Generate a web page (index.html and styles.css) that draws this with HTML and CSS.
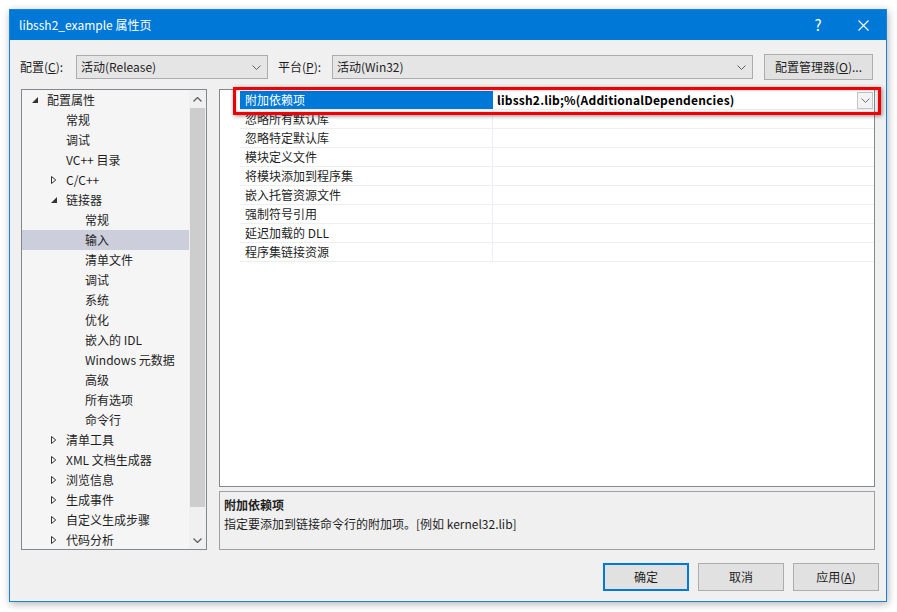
FILE: index.html
```html
<!DOCTYPE html>
<html>
  <head>
    <meta charset="UTF-8" />
    <title>libssh2_example 属性页</title>
    <link rel="stylesheet" href="styles.css">
  </head>
  <body>
    <div class="window">
      <div class="titlebar">
        <span class="title">libssh2_example 属性页</span>
        <span class="tb-help">?</span>
        <span class="tb-close">
          <svg width="11" height="11" viewBox="0 0 11 11"><path d="M0.5 0.5 L10.5 10.5 M10.5 0.5 L0.5 10.5" stroke="#fff" stroke-width="1.1" fill="none"/></svg>
        </span>
      </div>

      <div class="client">
        <div class="config-row">
          <span class="lbl lbl-config">配置(<u>C</u>):</span>
          <div class="combo combo-config">
            <span>活动(Release)</span>
            <svg class="chev" width="9" height="5" viewBox="0 0 9 5"><polyline points="0.5,0.5 4.5,4.5 8.5,0.5" fill="none" stroke="#606060"/></svg>
          </div>
          <span class="lbl lbl-platform">平台(<u>P</u>):</span>
          <div class="combo combo-platform">
            <span>活动(Win32)</span>
            <svg class="chev" width="9" height="5" viewBox="0 0 9 5"><polyline points="0.5,0.5 4.5,4.5 8.5,0.5" fill="none" stroke="#606060"/></svg>
          </div>
          <button class="btn btn-manager">配置管理器(<u>O</u>)...</button>
        </div>

        <div class="main">
          <div class="tree">
            <ul class="tree-list">
              <li class="node lvl0"><span class="exp"><svg width="6" height="6" viewBox="0 0 6 6"><polygon points="6,0 6,6 0,6" fill="#333"/></svg></span>配置属性</li>
              <li class="node lvl1"><span class="exp"></span>常规</li>
              <li class="node lvl1"><span class="exp"></span>调试</li>
              <li class="node lvl1"><span class="exp"></span>VC++ 目录</li>
              <li class="node lvl1"><span class="exp"><svg width="6" height="8" viewBox="0 0 6 8"><polygon points="0.5,0.5 4.8,4 0.5,7.5" fill="none" stroke="#333"/></svg></span>C/C++</li>
              <li class="node lvl1"><span class="exp"><svg width="6" height="6" viewBox="0 0 6 6"><polygon points="6,0 6,6 0,6" fill="#333"/></svg></span>链接器</li>
              <li class="node lvl2"><span class="exp"></span>常规</li>
              <li class="node lvl2 selected"><span class="exp"></span>输入</li>
              <li class="node lvl2"><span class="exp"></span>清单文件</li>
              <li class="node lvl2"><span class="exp"></span>调试</li>
              <li class="node lvl2"><span class="exp"></span>系统</li>
              <li class="node lvl2"><span class="exp"></span>优化</li>
              <li class="node lvl2"><span class="exp"></span>嵌入的 IDL</li>
              <li class="node lvl2"><span class="exp"></span>Windows 元数据</li>
              <li class="node lvl2"><span class="exp"></span>高级</li>
              <li class="node lvl2"><span class="exp"></span>所有选项</li>
              <li class="node lvl2"><span class="exp"></span>命令行</li>
              <li class="node lvl1"><span class="exp"><svg width="6" height="8" viewBox="0 0 6 8"><polygon points="0.5,0.5 4.8,4 0.5,7.5" fill="none" stroke="#333"/></svg></span>清单工具</li>
              <li class="node lvl1"><span class="exp"><svg width="6" height="8" viewBox="0 0 6 8"><polygon points="0.5,0.5 4.8,4 0.5,7.5" fill="none" stroke="#333"/></svg></span>XML 文档生成器</li>
              <li class="node lvl1"><span class="exp"><svg width="6" height="8" viewBox="0 0 6 8"><polygon points="0.5,0.5 4.8,4 0.5,7.5" fill="none" stroke="#333"/></svg></span>浏览信息</li>
              <li class="node lvl1"><span class="exp"><svg width="6" height="8" viewBox="0 0 6 8"><polygon points="0.5,0.5 4.8,4 0.5,7.5" fill="none" stroke="#333"/></svg></span>生成事件</li>
              <li class="node lvl1"><span class="exp"><svg width="6" height="8" viewBox="0 0 6 8"><polygon points="0.5,0.5 4.8,4 0.5,7.5" fill="none" stroke="#333"/></svg></span>自定义生成步骤</li>
              <li class="node lvl1"><span class="exp"><svg width="6" height="8" viewBox="0 0 6 8"><polygon points="0.5,0.5 4.8,4 0.5,7.5" fill="none" stroke="#333"/></svg></span>代码分析</li>
            </ul>
            <div class="vscroll">
              <div class="sarrow">
                <svg width="9" height="5" viewBox="0 0 9 5"><polyline points="0.5,4.5 4.5,0.5 8.5,4.5" fill="none" stroke="#606060" stroke-width="1.3"/></svg>
              </div>
              <div class="thumb"></div>
              <div class="sarrow">
                <svg width="9" height="5" viewBox="0 0 9 5"><polyline points="0.5,0.5 4.5,4.5 8.5,0.5" fill="none" stroke="#606060" stroke-width="1.3"/></svg>
              </div>
            </div>
          </div>

          <div class="right">
            <div class="grid">
              <div class="prow active">
                <div class="pname">附加依赖项</div>
                <div class="pval">
                  <span class="pval-text">libssh2.lib;%(AdditionalDependencies)</span>
                  <span class="dd">
                    <svg width="9" height="5" viewBox="0 0 9 5"><polyline points="0.5,0.5 4.5,4.5 8.5,0.5" fill="none" stroke="#707070"/></svg>
                  </span>
                </div>
              </div>
              <div class="prow"><div class="pname">忽略所有默认库</div><div class="pval"></div></div>
              <div class="prow"><div class="pname">忽略特定默认库</div><div class="pval"></div></div>
              <div class="prow"><div class="pname">模块定义文件</div><div class="pval"></div></div>
              <div class="prow"><div class="pname">将模块添加到程序集</div><div class="pval"></div></div>
              <div class="prow"><div class="pname">嵌入托管资源文件</div><div class="pval"></div></div>
              <div class="prow"><div class="pname">强制符号引用</div><div class="pval"></div></div>
              <div class="prow"><div class="pname">延迟加载的 DLL</div><div class="pval"></div></div>
              <div class="prow"><div class="pname">程序集链接资源</div><div class="pval"></div></div>
              <div class="callout"></div>
            </div>
            <div class="desc">
              <div class="desc-title">附加依赖项</div>
              <div class="desc-text">指定要添加到链接命令行的附加项。[例如 kernel32.lib]</div>
            </div>
          </div>
        </div>

        <div class="buttons">
          <button class="btn btn-ok">确定</button>
          <button class="btn">取消</button>
          <button class="btn">应用(<u>A</u>)</button>
        </div>
      </div>
    </div>
  </body>
</html>
```

FILE: styles.css
```css
body {
  margin: 0;
  background: #fff;
  font-family: "Noto Sans CJK SC", "Noto Sans", sans-serif;
  font-size: 12px;
  color: #1e1e1e;
}
.window {
  margin: 9px;
  width: 878px;
  height: 593px;
  box-sizing: border-box;
  border: 1px solid #1883d7;
  background: #f0f0f0;
  display: flex;
  flex-direction: column;
  box-shadow: 1px 2px 8px rgba(0,0,0,0.3);
}
.titlebar {
  height: 30px;
  flex: none;
  background: #0078d7;
  color: #fff;
  display: flex;
  align-items: center;
  padding-left: 9px;
}
.title {
  flex: 1;
  line-height: 16px;
}
.tb-help {
  width: 46px;
  text-align: center;
  font-size: 15px;
  line-height: 16px;
}
.tb-close {
  width: 45px;
  display: flex;
  justify-content: center;
}
.client {
  flex: 1;
  display: flex;
  flex-direction: column;
  padding: 14px 11px 10px 11px;
}

/* config row */
.config-row {
  display: flex;
  align-items: center;
  height: 26px;
}
.lbl {
  line-height: 16px;
}
.lbl-config {
  margin-left: -1px;
  width: 56px;
}
.lbl-platform {
  margin-left: 10px;
  width: 54px;
}
.combo {
  height: 24px;
  box-sizing: border-box;
  border: 1px solid #acacac;
  background: #e5e5e5;
  display: flex;
  align-items: center;
  justify-content: space-between;
  padding: 0 6px 0 4px;
  line-height: 16px;
}
.combo-config {
  width: 192px;
}
.combo-platform {
  width: 421px;
}
.btn {
  font: inherit;
  color: #1e1e1e;
  background: #e1e1e1;
  border: 1px solid #adadad;
  height: 28px;
  width: 86px;
  padding: 0;
  line-height: 16px;
}
.btn-manager {
  margin-left: 11px;
  width: 109px;
  height: 26px;
}
.btn-ok {
  border: 2px solid #0078d7;
}

/* main area */
.main {
  display: flex;
  gap: 12px;
  margin-top: 9px;
  height: 461px;
}
.tree {
  width: 186px;
  box-sizing: border-box;
  border: 1px solid #828790;
  background: #f5f5f5;
  display: flex;
  overflow: hidden;
}
.tree-list {
  flex: 1;
  list-style: none;
  margin: 0;
  padding: 0;
}
.node {
  height: 20px;
  line-height: 20px;
  display: flex;
  align-items: center;
  white-space: nowrap;
}
.node.lvl0 { padding-left: 10px; }
.node.lvl1 { padding-left: 29px; }
.node.lvl2 { padding-left: 48px; }
.node.selected {
  background: #cccedb;
}
.exp {
  width: 15px;
  flex: none;
  display: flex;
  align-items: center;
}
.vscroll {
  width: 17px;
  background: #f0f0f0;
  display: flex;
  flex-direction: column;
}
.sarrow {
  height: 18px;
  display: flex;
  align-items: center;
  justify-content: center;
  flex: none;
}
.thumb {
  flex: 1;
  margin: 0 1px 24px 1px;
  background: #cdcdcd;
}

/* property grid */
.right {
  width: 656px;
  display: flex;
  flex-direction: column;
  gap: 4px;
}
.grid {
  height: 398px;
  flex: none;
  box-sizing: border-box;
  border: 1px solid #828790;
  background: #fff;
  padding-top: 1px;
  position: relative;
}
.prow {
  display: flex;
  height: 19px;
  box-sizing: border-box;
  border-bottom: 1px solid #edeef3;
  margin-left: 20px;
}
.pname {
  width: 253px;
  box-sizing: border-box;
  border-right: 1px solid #edeef3;
  padding-left: 5px;
  line-height: 18px;
}
.pval {
  flex: 1;
  display: flex;
  align-items: center;
  justify-content: space-between;
  padding-left: 4px;
}
.prow.active .pname {
  background: #0078d7;
  color: #fff;
  border-right: none;
}
.pval-text {
  font-weight: bold;
  color: #000;
  line-height: 18px;
  letter-spacing: 0.2px;
}
.dd {
  width: 16px;
  height: 17px;
  box-sizing: border-box;
  border: 1px solid #c4c4c4;
  background: #f3f3f3;
  display: flex;
  align-items: center;
  justify-content: center;
  margin-right: 1px;
}
.callout {
  position: absolute;
  left: 13px;
  top: -3px;
  width: 648px;
  height: 28px;
  box-sizing: border-box;
  border: 3px solid #f00000;
  box-shadow: 1px 1px 4px rgba(0,0,0,0.45), inset 0 0 3px rgba(0,0,0,0.3);
}
.desc {
  flex: 1;
  box-sizing: border-box;
  border: 1px solid #a0a0a0;
  background: #f0f0f0;
  padding: 3px 4px;
  line-height: 19px;
}
.desc-title {
  font-weight: bold;
}

/* dialog buttons */
.buttons {
  display: flex;
  justify-content: flex-end;
  gap: 9px;
  margin-top: 13px;
  margin-right: -4px;
}
```
